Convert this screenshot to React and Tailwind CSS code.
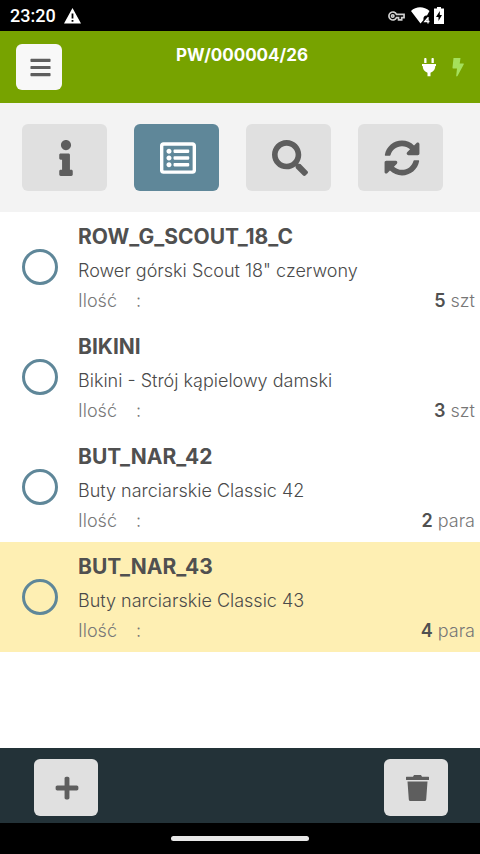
import React, { useState } from 'react'
import { FaInfo, FaRegListAlt, FaSearch, FaSyncAlt, FaPlus, FaBars } from 'react-icons/fa'

const ITEMS = [
  { code: 'ROW_G_SCOUT_18_C', name: 'Rower górski Scout 18" czerwony', qty: 5, unit: 'szt' },
  { code: 'BIKINI', name: 'Bikini - Strój kąpielowy damski', qty: 3, unit: 'szt' },
  { code: 'BUT_NAR_42', name: 'Buty narciarskie Classic 42', qty: 2, unit: 'para' },
  { code: 'BUT_NAR_43', name: 'Buty narciarskie Classic 43', qty: 4, unit: 'para', highlight: true },
]

const TABS = [
  { id: 'info', label: 'Informacje', Icon: FaInfo },
  { id: 'list', label: 'Lista pozycji', Icon: FaRegListAlt },
  { id: 'search', label: 'Szukaj', Icon: FaSearch },
  { id: 'sync', label: 'Odśwież', Icon: FaSyncAlt },
]

function StatusBar() {
  return (
    <div className="h-[31px] flex items-center justify-between pl-2.5 pr-9 bg-black text-white">
      <div className="flex items-center gap-2">
        <span className="font-[Roboto,sans-serif] text-lg leading-8 font-medium">23:20</span>
        <svg viewBox="0 0 17 16" className="w-[17px] h-4" fill="currentColor">
          <path fillRule="evenodd" d="M8.5 0 17 15.5H0ZM7.6 5.5v5h1.8v-5ZM7.6 12v1.8h1.8V12Z" />
        </svg>
      </div>
      <div className="flex items-center gap-1">
        <svg viewBox="0 0 18 10" className="w-[17px] h-2.5 mr-0.5" fill="none"
             stroke="#d0d0d0" strokeWidth="1.8">
          <path d="M9 3.3A4.200 4.200 0 1 0 9 6.700h2.200V9h3.300V6.700H17V3.300Z" />
          <circle cx="5" cy="5" r="1.3" />
        </svg>
        <svg viewBox="0 0 19 17" className="w-[19px] h-[17px]" fill="currentColor">
          <path d="M0 4C5-1 13-1 18.5 4L16 8.5C13.5 8 12 10 12.5 13L9.5 16.5Z" />
          <path d="M17 10v6.5M17.2 10.5 13.8 14.5H18.5" fill="none" stroke="currentColor" strokeWidth="1.3" />
        </svg>
        <svg viewBox="0 0 10 17" className="w-2.5 h-[17px]">
          <path d="M3 0h4v1.5h3V17H0V1.5h3Z" fill="currentColor" />
          <path d="M5.8 4 2 10h2.5v4L8 8H5.8Z" fill="#000" />
        </svg>
      </div>
    </div>
  )
}

function Header({ title }) {
  return (
    <header className="h-[72px] flex items-center px-4 bg-[#77a300] text-white">
      <button type="button" aria-label="Menu"
              className="w-[46px] h-[46px] flex items-center justify-center pl-0.5 rounded-md bg-[#f8f8f8] text-[#5e5e5e]">
        <FaBars size={23} />
      </button>
      <h1 className="flex-1 self-start pt-3 text-center text-[17px] leading-6 font-bold">{title}</h1>
      <div className="flex items-center gap-4">
        <svg viewBox="0 0 14 19" className="w-3.5 h-[19px]" fill="currentColor">
          <path d="M2.2 1a1.100 1.100 0 0 1 2.300 0V5H2.200ZM9.500 1a1.100 1.100 0 0 1 2.300 0V5H9.500ZM0 6h14v2h-.7c0 3-1.300 5.200-4.800 6.800V18.300h-3v-3.500C2 13.200.7 11 .7 8H0Z" />
        </svg>
        <svg viewBox="0 0 12 19" className="w-3 h-[19px]" fill="#a5e05c">
          <path d="M1.500 0h7L7.700 5.500H11.500q.5.200.2 1L5.500 18q-.8.800-1.300 0L5 10.500H1Q.5 10.300.5 9.500Z" />
        </svg>
      </div>
    </header>
  )
}

function ItemRow({ item, checked, onSelect }) {
  return (
    <li className={item.highlight ? 'bg-[#feefb3]' : 'bg-white'}>
      <label className="h-[110px] flex items-center pl-[22px] pr-[5px]">
        <input type="radio" name="item" checked={checked} onChange={onSelect}
               className="appearance-none shrink-0 w-9 h-9 rounded-full border-3 border-[#5f8799] checked:bg-[#5f8799]" />
        <div className="flex-1 min-w-0 pl-5">
          <div className="text-[21px] leading-9 font-bold text-[#505050]">{item.code}</div>
          <div className="text-lg leading-8 font-light text-[#4a4a4a]">{item.name}</div>
          <div className="flex items-baseline text-lg leading-7 font-light text-[#777777]">
            <span className="w-[58px]">Ilość</span>
            <span>:</span>
            <span className="ml-auto"><b className="font-semibold text-[#505050]">{item.qty}</b> {item.unit}</span>
          </div>
        </div>
      </label>
    </li>
  )
}

export default function App() {
  const [tab, setTab] = useState('list')
  const [selected, setSelected] = useState(null)

  return (
    <div className="min-h-screen flex flex-col bg-white font-[Inter,sans-serif]">
      <StatusBar />
      <Header title="PW/000004/26" />

      <nav className="h-[109px] flex items-center gap-[27px] px-[22px] bg-[#f3f3f3]">
        {TABS.map(({ id, label, Icon }) => (
          <button key={id} type="button" aria-label={label} onClick={() => setTab(id)}
                  className={`w-[85px] h-[67px] flex items-center justify-center pl-0.5 rounded-md ${
                    tab === id ? 'bg-[#5f8799] text-white' : 'bg-[#e0e0e0] text-[#5e5e5e]'}`}>
            <Icon size={36} />
          </button>
        ))}
      </nav>

      <main className="flex-1">
        <ul>
          {ITEMS.map(item => (
            <ItemRow key={item.code} item={item} checked={selected === item.code}
                     onSelect={() => setSelected(item.code)} />
          ))}
        </ul>
      </main>

      <footer>
        <div className="h-[75px] flex items-center justify-between pl-[34px] pr-8 pt-1 bg-[#233238] text-[#5e5e5e]">
          <button type="button" aria-label="Dodaj"
                  className="w-16 h-[57px] flex items-center justify-center pl-0.5 rounded-md bg-[#e0e0e0]">
            <FaPlus size={26} />
          </button>
          <button type="button" aria-label="Usuń"
                  className="w-16 h-[57px] flex items-center justify-center pl-0.5 rounded-md bg-[#e0e0e0]">
            <svg viewBox="0 0 23 26" className="w-[23px] h-[26px]" fill="currentColor">
              <path d="M8 0h7l1 1.700h6.500q.5 0 .5.500v2.300q0 .5-.5.500H.5Q0 5 0 4.500V2.200q0-.5.500-.5H7ZM1.500 6.500h20L20.200 24.500Q20 26 18.700 26H4.300Q3 26 2.800 24.500Z" />
            </svg>
          </button>
        </div>
        <div className="h-[31px] flex items-center justify-center bg-black">
          <div className="w-[138px] h-[5px] rounded-full bg-[#e8e8e8]" />
        </div>
      </footer>
    </div>
  )
}
